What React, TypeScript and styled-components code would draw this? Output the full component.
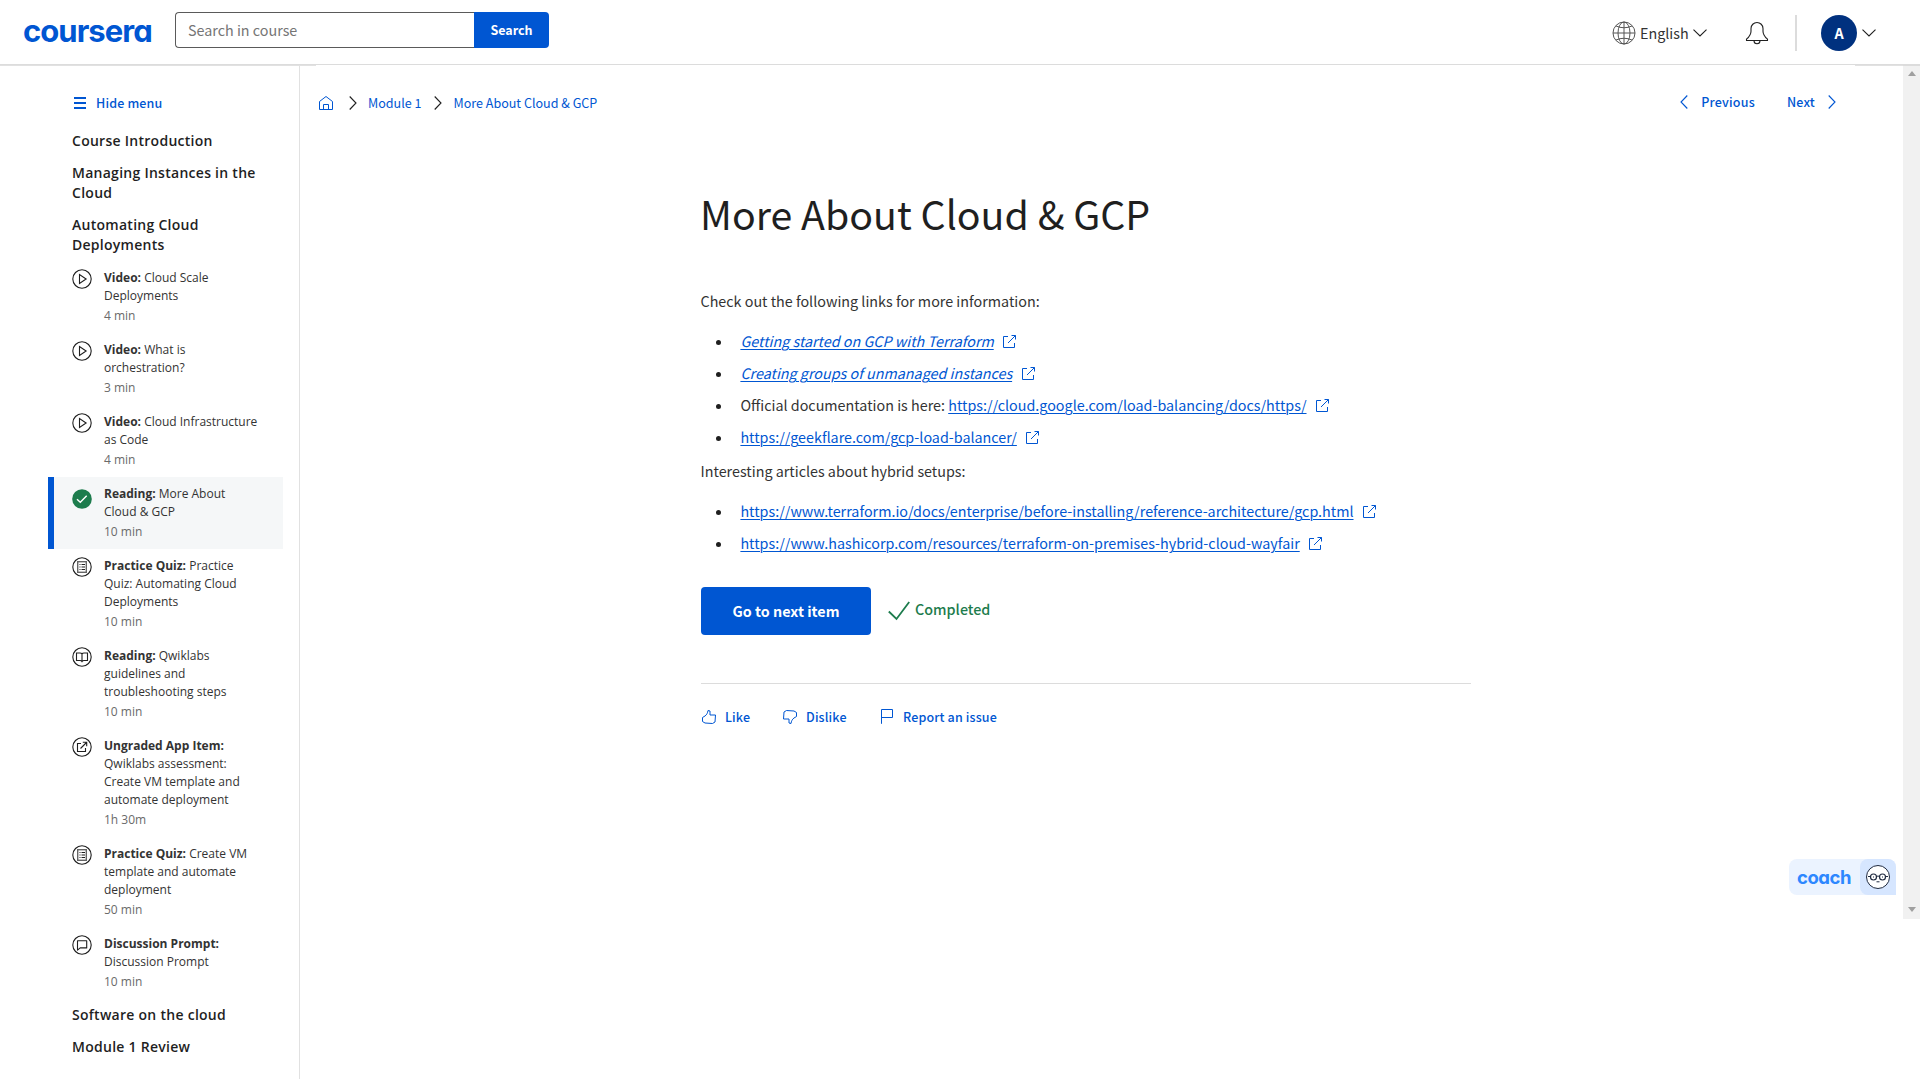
import React from "react";
import styled, { createGlobalStyle, css } from "styled-components";

const BLUE = "#0056d2";
const INK = "#1f1f1f";
const SANS = `"Noto Sans CJK SC", "Noto Sans", sans-serif`;

const GlobalStyle = createGlobalStyle`
  *, *::before, *::after { box-sizing: border-box; }
  body { margin: 0; background: #fff; color: ${INK}; font-family: ${SANS}; overflow: hidden; }
  a { color: ${BLUE}; }
  svg { display: block; flex: none; }
  ul { margin: 0; padding: 0; list-style: none; }
  p, h1, h2 { margin: 0; }
`;

const Page = styled.div`
  height: 1079px;
  display: flex;
  flex-direction: column;
`;

/* ---------- header ---------- */

const Header = styled.header`
  height: 65px;
  flex: none;
  display: flex;
  align-items: flex-start;
  border-bottom: 1px solid #dcdcdc;
`;

const Logo = styled.div`
  width: 151px;
  height: 60px;
  padding-left: 23px;
  font: 700 31px/61px Inter, sans-serif;
  font-feature-settings: "cv11";
  letter-spacing: -0.95px;
  color: ${BLUE};
`;

const SearchForm = styled.div`
  display: flex;
  width: 374px;
  height: 36px;
  margin: 12px 0 0 24px;
`;

const SearchField = styled.div`
  flex: 1;
  border: 1px solid #5a5a5a;
  border-right: 0;
  border-radius: 4px 0 0 4px;
  padding-left: 12px;
  font-size: 14.33px;
  line-height: 33px;
  color: #757575;
`;

const SearchButton = styled.button`
  width: 75px;
  border: 0;
  padding: 0;
  border-radius: 0 4px 4px 0;
  background: ${BLUE};
  color: #fff;
  font: 700 12.5px/36px ${SANS};
`;

const HeaderTools = styled.div`
  margin-left: auto;
  display: flex;
  align-items: center;
  height: 66px;
  padding-right: 44px;
`;

const Language = styled.span`
  width: 48px;
  margin: 0 5px 0 4px;
  font-size: 14.33px;
  line-height: 24px;
  white-space: nowrap;
  color: #333;
`;

const BellSlot = styled.div`
  margin: 0 26px 0 38px;
`;

const Separator = styled.div`
  width: 2px;
  height: 36px;
  background: #dcdcdc;
`;

const Avatar = styled.div`
  width: 36px;
  height: 36px;
  margin: 0 5px 0 24px;
  border-radius: 50%;
  background: #00317f;
  color: #fff;
  font-weight: 700;
  font-size: 14.33px;
  line-height: 36px;
  text-align: center;
`;

/* ---------- body ---------- */

const Body = styled.div`
  flex: 1;
  display: flex;
  min-height: 0;
  background: linear-gradient(#e1e1e1, #e1e1e1) 0 0 / 316px 1px no-repeat,
    linear-gradient(#e1e1e1, #e1e1e1) 100% 0 / 65px 1px no-repeat;
`;

const Sidebar = styled.nav`
  width: 300px;
  flex: none;
  border-right: 1px solid #e1e1e1;
  padding: 28px 16px 0 48px;
  font-family: "Open Sans", sans-serif;
`;

const HideMenu = styled.div`
  display: flex;
  align-items: center;
  gap: 10px;
  height: 20px;
  margin: 0 0 18px 26px;
  color: ${BLUE};
  font: 500 12.5px/20px ${SANS};
  letter-spacing: 0.15px;
`;

const Lesson = styled.h2`
  margin: 6px 0;
  padding: 0 20px 0 24px;
  font-size: 14px;
  line-height: 20px;
  font-weight: 600;
  letter-spacing: 0.27px;
  & + & { margin-top: 12px; }
`;

const Item = styled.li<{ $active?: boolean }>`
  display: flex;
  align-items: flex-start;
  gap: 12px;
  padding: 8px 24px 8px 18px;
  border-left: 6px solid ${(p) => (p.$active ? BLUE : "transparent")};
  background: ${(p) => (p.$active ? "#f5f7f8" : "transparent")};
  background-clip: padding-box;
  & > svg { margin-top: ${(p) => (p.$active ? 4 : 0)}px; }
`;

const ItemName = styled.div`
  font-size: 12px;
  line-height: 18px;
  color: #333;
  b { font-weight: 700; }
`;

const Duration = styled.div`
  margin-top: 2px;
  font-size: 12px;
  line-height: 18px;
  color: #6a6a6a;
`;

const Main = styled.main`
  flex: 1;
  display: flex;
  flex-direction: column;
`;

const TopBar = styled.div`
  display: flex;
  align-items: center;
  height: 20px;
  margin: 28px 67px 0 18px;
`;

const CrumbGap = styled.span`
  width: 15px;
`;

const Crumb = styled.a<{ $gap: number }>`
  margin: 0 ${(p) => p.$gap}px 0 11px;
  font-size: 12.55px;
  line-height: 20px;
  text-decoration: none;
`;

const Pager = styled.div`
  margin-left: auto;
  display: flex;
  align-items: center;
  color: ${BLUE};
  font-weight: 500;
  font-size: 12.5px;
  line-height: 20px;
  letter-spacing: 0.2px;
  padding-bottom: 2px;
  gap: 13px;
`;

const PagerGap = styled.span`
  width: 6px;
`;

const Article = styled.article`
  width: 770px;
  margin: 70px 0 0 401px;
`;

const Title = styled.h1`
  font-weight: 400;
  font-size: 39.3px;
  line-height: 60px;
  margin: 0 0 46px -1px;
`;

const bodyText = css`
  font-size: 14.33px;
  line-height: 24px;
`;

const Paragraph = styled.p`
  ${bodyText}
  height: 24px;
  margin-left: -0.5px;
  color: #333;
`;

const LinkList = styled.ul<{ $bottom: number }>`
  padding: 12px 0 ${(p) => p.$bottom}px 39.4px;
`;

const LinkRow = styled.li`
  ${bodyText}
  display: flex;
  align-items: center;
  height: 32px;
  white-space: pre;
  color: #333;
  &::before {
    content: "";
    width: 5px;
    height: 5px;
    margin: 2px 19px 0 -24px;
    border-radius: 50%;
    background: ${INK};
  }
  & > svg { margin: 0 0 0 8.4px; }
`;

const Link = styled.a<{ $italic?: boolean }>`
  font-style: ${(p) => (p.$italic ? "italic" : "normal")};
  text-decoration: underline;
  text-decoration-thickness: 1px;
  text-underline-offset: 2px;
  text-decoration-skip-ink: auto;
`;

const Actions = styled.div`
  display: flex;
  align-items: center;
  height: 48px;
`;

const NextButton = styled.button`
  width: 170px;
  height: 48px;
  border: 0;
  padding: 0;
  margin-right: 17px;
  border-radius: 4px;
  background: ${BLUE};
  color: #fff;
  font: 700 14.33px/48px ${SANS};
`;

const Completed = styled.span`
  margin: -5px 0 0 5px;
  color: #1d7c4d;
  font-weight: 500;
  ${bodyText}
`;

const Feedback = styled.div`
  display: flex;
  margin-top: 48px;
  border-top: 1px solid #dcdcdc;
  padding-top: 23px;
`;

const FeedbackAction = styled.div<{ $width: number }>`
  width: ${(p) => p.$width}px;
  display: flex;
  align-items: center;
  gap: 8px;
  color: ${BLUE};
  font-weight: 500;
  font-size: 12.5px;
  line-height: 20px;
  letter-spacing: 0.14px;
`;

const Coach = styled.div`
  display: flex;
  width: 107px;
  height: 36px;
  margin: 132px 7px 0 auto;
  border-radius: 8px 8px 0 8px;
  background: #ebf3ff;
`;

const CoachName = styled.span`
  flex: 1;
  padding-left: 8px;
  font: 700 18.5px/36px Inter, sans-serif;
  font-feature-settings: "cv11";
  letter-spacing: -0.45px;
  color: #2d87ff;
`;

const CoachFace = styled.span`
  width: 36px;
  height: 36px;
  padding: 6px;
  border-radius: 8px 8px 0 8px;
  background: #d6e6ff;
`;

const Scrollbar = styled.div`
  width: 17px;
  height: 854px;
  flex: none;
  display: flex;
  flex-direction: column;
  justify-content: space-between;
  align-items: center;
  padding: 6px 0 7px;
  background: #f1f1f1;
  box-shadow: inset 0 1px #dcdcdc;
`;

/* ---------- icons ---------- */

const Stroke: React.FC<{ w: number; h?: number; box: string; d: string; color?: string; sw?: number }> = ({
  w, h, box, d, color = BLUE, sw = 1,
}) => (
  <svg width={w} height={h ?? w} viewBox={box} fill="none" stroke={color} strokeWidth={sw}>
    <path d={d} />
  </svg>
);

const ChevronRight = ({ color = INK }) => (
  <Stroke w={8} h={14} box="0 0 8 14" color={color} d="M.7.5 7 7 .7 13.5" sw={1.1} />
);
const ChevronLeft = () => <Stroke w={8} h={14} box="0 0 8 14" d="M7.3.5 1 7l6.3 6.5" sw={1.1} />;
const ChevronDown = () => <Stroke w={14} h={8} box="0 0 14 8" color={INK} d="M.5.7 7 7 13.5.7" sw={1.1} />;
const External = () => (
  <Stroke w={15} box="0 0 15 15" d="M6 2.5H1.5v11h11V9M6 9l7.5-7.5M9.5 1.5h4v4" />
);

const Kinds = {
  video: <path d="M7.5 5.6v8.8l6.6-4.4z" />,
  quiz: (
    <>
      <rect x="5.7" y="4.7" width="8.6" height="10.6" strokeWidth="1.4" stroke="#666" />
      <path d="M7.5 7.5h1M9.5 7.5H13M7.5 10h1M9.5 10H13M7.5 12.5h1M9.5 12.5H13" />
    </>
  ),
  book: <path d="M10 15V7Q9.5 6 8 6H4.5v7.5H8q1.500 0 2 1 .5-1 2-1h3.500V6H12q-1.500 0-2 1" />,
  app: <path d="M9 6.500H5.500v8h8V11M8.500 11.500l6-6M10.800 5.300h3.900v3.900" />,
  chat: <path d="M5.500 5.700h9.200v7.200H8.200l-2.700 2.300z" strokeLinejoin="round" />,
};
type Kind = keyof typeof Kinds;

const ItemIcon: React.FC<{ kind: Kind; done?: boolean }> = ({ kind, done }) =>
  done ? (
    <svg width="20" height="20" viewBox="0 0 20 20" fill="none">
      <circle cx="10" cy="10" r="9.8" fill="#1d7c4d" />
      <path d="M5 10.3 8.3 13.3 14.7 6.8" stroke="#fff" strokeWidth="1.4" />
    </svg>
  ) : (
    <svg width="20" height="20" viewBox="0 0 20 20" fill="none" stroke={INK} strokeWidth="1.1">
      <circle cx="10" cy="10" r="9.2" />
      {Kinds[kind]}
    </svg>
  );

/* ---------- data ---------- */

const items: { kind: Kind; type: string; name: string; time: string; done?: boolean }[] = [
  { kind: "video", type: "Video:", name: "Cloud Scale Deployments", time: "4 min" },
  { kind: "video", type: "Video:", name: "What is orchestration?", time: "3 min" },
  { kind: "video", type: "Video:", name: "Cloud Infrastructure as Code", time: "4 min" },
  { kind: "book", type: "Reading:", name: "More About Cloud & GCP", time: "10 min", done: true },
  { kind: "quiz", type: "Practice Quiz:", name: "Practice Quiz: Automating Cloud Deployments", time: "10 min" },
  { kind: "book", type: "Reading:", name: "Qwiklabs guidelines and troubleshooting steps", time: "10 min" },
  { kind: "app", type: "Ungraded App Item:", name: "Qwiklabs assessment: Create VM template and automate deployment", time: "1h 30m" },
  { kind: "quiz", type: "Practice Quiz:", name: "Create VM template and automate deployment", time: "50 min" },
  { kind: "chat", type: "Discussion Prompt:", name: "Discussion Prompt", time: "10 min" },
];

const gcpLinks = [
  { text: "Getting started on GCP with Terraform", italic: true },
  { text: "Creating groups of unmanaged instances", italic: true },
  { lead: "Official documentation is here: ", text: "https://cloud.google.com/load-balancing/docs/https/" },
  { text: "https://geekflare.com/gcp-load-balancer/" },
];
const hybridLinks = [
  { text: "https://www.terraform.io/docs/enterprise/before-installing/reference-architecture/gcp.html" },
  { text: "https://www.hashicorp.com/resources/terraform-on-premises-hybrid-cloud-wayfair" },
];

const Links: React.FC<{ rows: { lead?: string; text: string; italic?: boolean }[]; bottom: number }> = ({ rows, bottom }) => (
  <LinkList $bottom={bottom}>
    {rows.map((r) => (
      <LinkRow key={r.text}>
        {r.lead}
        <Link $italic={r.italic}>{r.text}</Link>
        <External />
      </LinkRow>
    ))}
  </LinkList>
);

export default function App() {
  return (
    <Page>
      <GlobalStyle />
      <Header>
        <Logo>coursera</Logo>
        <SearchForm>
          <SearchField>Search in course</SearchField>
          <SearchButton>Search</SearchButton>
        </SearchForm>
        <HeaderTools>
          <svg width="24" height="24" viewBox="0 0 24 24" fill="none" stroke="#555">
            <circle cx="12" cy="12" r="11" />
            <ellipse cx="12" cy="12" rx="6" ry="11" />
            <path d="M12 1v22M1 12h22M4 5q8 3.500 16 0M4 19q8-3.500 16 0" />
          </svg>
          <Language>English</Language>
          <ChevronDown />
          <BellSlot>
            <svg width="24" height="24" viewBox="0 0 24 24" fill="none" stroke={INK} strokeWidth="1.1">
              <path d="M1.500 19.500v-1.300c2.500-2.200 4.500-4 4.500-8V7.500a6 6 0 0 1 12 0v2.700c0 4 2 5.800 4.500 8v1.300zM9 19.800a3 3 0 0 0 6 0" strokeLinejoin="round" />
            </svg>
          </BellSlot>
          <Separator />
          <Avatar>A</Avatar>
          <ChevronDown />
        </HeaderTools>
      </Header>
      <Body>
        <Sidebar>
          <HideMenu>
            <Stroke w={12} box="0 0 12 12" d="M0 1h12M0 6h12M0 11h12" sw={2} />
            Hide menu
          </HideMenu>
          <Lesson>Course Introduction</Lesson>
          <Lesson>Managing Instances in the Cloud</Lesson>
          <Lesson>Automating Cloud Deployments</Lesson>
          <ul>
            {items.map((it) => (
              <Item key={it.type + it.name} $active={it.done}>
                <ItemIcon kind={it.kind} done={it.done} />
                <div>
                  <ItemName><b>{it.type}</b> {it.name}</ItemName>
                  <Duration>{it.time}</Duration>
                </div>
              </Item>
            ))}
          </ul>
          <Lesson>Software on the cloud</Lesson>
          <Lesson>Module 1 Review</Lesson>
        </Sidebar>
        <Main>
          <TopBar>
            <svg width="16" height="16" viewBox="0 0 16 16" fill="none" stroke={BLUE}>
              <path d="M1.500 6.500 8 1.500l6.500 5v8h-13zM5.500 14.500v-5h5v5" />
            </svg>
            <CrumbGap />
            <ChevronRight />
            <Crumb $gap={13}>Module 1</Crumb>
            <ChevronRight />
            <Crumb $gap={0}>More About Cloud &amp; GCP</Crumb>
            <Pager>
              <ChevronLeft />
              Previous
              <PagerGap />
              Next
              <ChevronRight color={BLUE} />
            </Pager>
          </TopBar>
          <Article>
            <Title>More About Cloud &amp; GCP</Title>
            <Paragraph>Check out the following links for more information:</Paragraph>
            <Links rows={gcpLinks} bottom={6} />
            <Paragraph>Interesting articles about hybrid setups:</Paragraph>
            <Links rows={hybridLinks} bottom={28} />
            <Actions>
              <NextButton>Go to next item</NextButton>
              <Stroke w={22} h={20} box="0 0 22 20" color="#1d7c4d" d="M.8 10.500 8.500 18 21.200 1" sw={1.8} />
              <Completed>Completed</Completed>
            </Actions>
            <Feedback>
              <FeedbackAction $width={81}>
                <Stroke w={16} box="0 0 16 16" d="M1.500 8.500 4 7C6 5.500 6.500 4 7 1.500L9 2v4h5.500L14 13l-2.500 1.500L4 14l-2.500-1.500z" />
                Like
              </FeedbackAction>
              <FeedbackAction $width={97}>
                <Stroke w={16} box="0 0 16 16" d="M14.500 7.500 12 9c-2 1.500-2.500 3-3 5.500L7 14v-4H1.500L2 3l2.500-1.500L12 2l2.500 1.500z" />
                Dislike
              </FeedbackAction>
              <FeedbackAction $width={140}>
                <Stroke w={16} box="0 0 16 16" d="M2.500 14.800V.5h11v8h-11" />
                Report an issue
              </FeedbackAction>
            </Feedback>
          </Article>
          <Coach>
            <CoachName>coach</CoachName>
            <CoachFace>
              <svg width="24" height="24" viewBox="0 0 24 24" fill="none" stroke="#1f2a40">
                <circle cx="12" cy="12" r="11.5" fill="#fff" />
                <circle cx="7.5" cy="12" r="3" strokeWidth="1.2" />
                <circle cx="16.500" cy="12" r="3" strokeWidth="1.2" />
                <path d="M10.500 11.500q1.500-1 3 0M2 11.500h2.500M19.500 11.500H22M7.500 11.500v1M16.500 11.500v1M10.500 16.800h3" />
              </svg>
            </CoachFace>
          </Coach>
        </Main>
        <Scrollbar>
          <svg width="8" height="5" viewBox="0 0 8 5"><path d="M0 5 4 0l4 5z" fill="#a0a0a0" /></svg>
          <svg width="8" height="5" viewBox="0 0 8 5"><path d="M0 0l4 5 4-5z" fill="#a0a0a0" /></svg>
        </Scrollbar>
      </Body>
    </Page>
  );
}
